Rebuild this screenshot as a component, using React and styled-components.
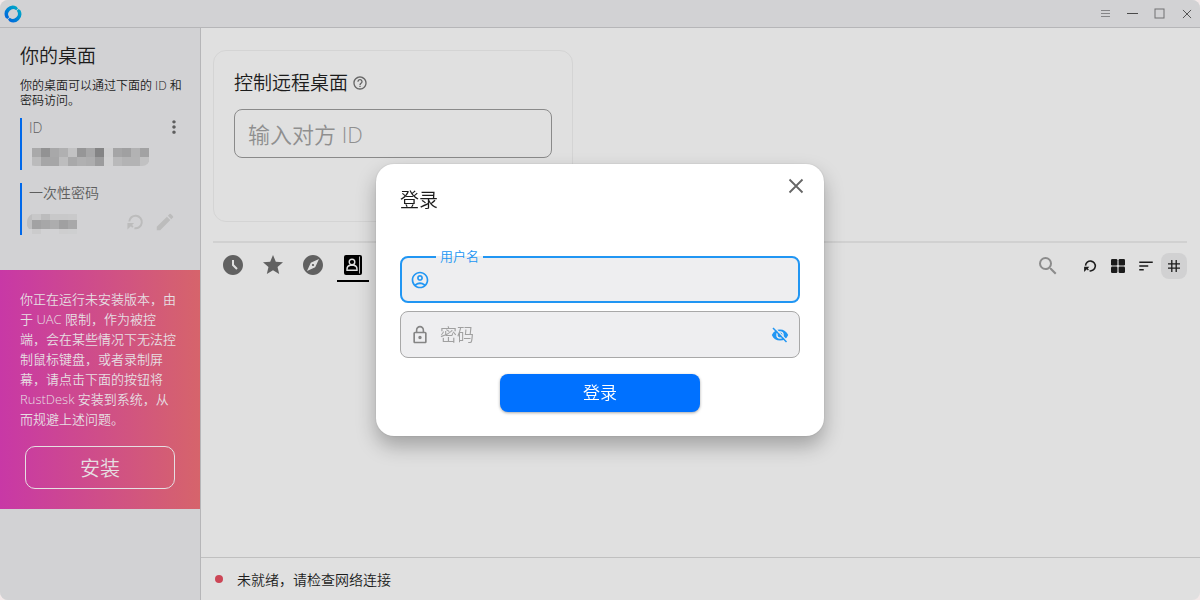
import React from 'react';
import styled, { createGlobalStyle } from 'styled-components';
import {
  MdAccessTimeFilled,
  MdEdit,
  MdExplore,
  MdHelpOutline,
  MdLockOutline,
  MdMoreVert,
  MdOutlineAccountCircle,
  MdSearch,
  MdSort,
  MdStar,
} from 'react-icons/md';

const GlobalStyle = createGlobalStyle`
  * {
    box-sizing: border-box;
  }

  body {
    margin: 0;
    background: #f3e9e9;
    color: #1c1c1c;
    font-family: "Open Sans", "Noto Sans CJK SC", sans-serif;
    font-weight: 350;
  }

  button, input {
    font: inherit;
    color: inherit;
  }

  button {
    padding: 0;
    border: 0;
    background: none;
  }

  svg {
    display: block;
    flex: none;
  }
`;

const Window = styled.div`
  min-height: 100vh;
  display: flex;
  flex-direction: column;
  background: #e0e0e0;
  border-radius: 8px;
  overflow: hidden;
`;

const TitleBar = styled.header`
  display: flex;
  align-items: center;
  justify-content: space-between;
  height: 28px;
  padding-left: 4px;
  background: #d2d2d4;
  border-bottom: 1px solid #b6b6b8;
`;

const WindowButtons = styled.div`
  display: flex;
`;

const WindowButton = styled.button`
  width: 27px;
  height: 27px;
  display: flex;
  align-items: center;
  justify-content: center;
`;

const Body = styled.div`
  flex: 1;
  display: flex;
`;

const Sidebar = styled.aside`
  width: 201px;
  flex: none;
  background: #d2d2d4;
  border-right: 1px solid #b6b6b8;
`;

const Desktop = styled.section`
  padding: 15px 14px 35px 20px;
`;

const Heading = styled.h2`
  margin: 0;
  font-size: 19px;
  line-height: 26px;
  font-weight: 350;
`;

const Hint = styled.p`
  margin: 9px 0 10px;
  font-size: 12px;
  line-height: 15px;
`;

const Board = styled.div`
  height: 52px;
  padding-left: 5px;
  border-left: 2px solid #0068ea;

  & + & {
    margin-top: 13px;
  }
`;

const BoardLabel = styled.div`
  display: flex;
  align-items: center;
  justify-content: space-between;
  height: 18px;
  padding-left: 2px;
  font-size: 14px;
  color: #5e5e5e;
`;

const BoardValue = styled.div`
  display: flex;
  align-items: center;
  height: 20px;
  margin-top: 11px;
`;

const BoardActions = styled.div`
  display: flex;
  gap: 10px;
  margin-left: auto;
  padding-right: 10px;
  color: #bcbcbc;
`;

const IconButton = styled.button`
  display: flex;
  align-items: center;
  justify-content: center;
  color: ${(props) => props.$color || 'inherit'};
`;

const InstallCard = styled.section`
  padding: 19px 20px 20px;
  background: linear-gradient(to right, #c838a6, #d6646b);
  color: #e6dfe2;
`;

const InstallText = styled.p`
  margin: 0 0 17px;
  font-size: 13px;
  line-height: 20px;
`;

const InstallButton = styled.button`
  display: block;
  width: 150px;
  height: 43px;
  margin: 0 auto;
  border: 1px solid #e6dfe2;
  border-radius: 10px;
  font-size: 20px;
`;

const Main = styled.main`
  flex: 1;
  min-width: 0;
  display: flex;
  flex-direction: column;
`;

const Content = styled.div`
  flex: 1;
  padding: 22px 13px 0 12px;
`;

const ConnectCard = styled.section`
  max-width: 360px;
  padding: 20px 20px 63px;
  border: 1px solid #d4d4d4;
  border-radius: 13px;
`;

const ConnectTitle = styled.div`
  display: flex;
  align-items: center;
  gap: 4px;
  height: 24px;
  margin-bottom: 14px;
  color: #666;
`;

const ConnectHeading = styled(Heading)`
  color: #1c1c1c;
`;

const RemoteInput = styled.input`
  display: block;
  width: 100%;
  height: 49px;
  padding: 0 13px;
  border: 1px solid #8a8a8a;
  border-radius: 8px;
  background: transparent;
  font-size: 22px;
  outline: none;

  &::placeholder {
    color: #8f8f8f;
    opacity: 1;
  }
`;

const PeerBar = styled.div`
  display: flex;
  align-items: center;
  justify-content: space-between;
  margin-top: 19px;
  padding-top: 7px;
  border-top: 2px solid #d1d1d1;
`;

const Tabs = styled.nav`
  display: flex;
  gap: 8px;
  padding-left: 4px;
`;

const Tab = styled.button`
  width: 32px;
  height: 32px;
  display: flex;
  align-items: center;
  justify-content: center;
  border-bottom: 2px solid ${(props) => (props.$active ? '#000' : 'transparent')};
  color: ${(props) => (props.$active ? '#000' : '#616161')};
`;

const Tools = styled.div`
  display: flex;
  gap: 2px;
`;

const Tool = styled(IconButton)`
  width: 26px;
  height: 26px;
  border-radius: 8px;
  background: ${(props) => (props.$active ? '#d1d1d2' : 'transparent')};
`;

const SearchTool = styled(Tool)`
  margin-right: 14px;
`;

const StatusBar = styled.footer`
  display: flex;
  align-items: center;
  gap: 14px;
  height: 43px;
  padding-left: 14px;
  border-top: 1px solid #c0c0c0;
  font-size: 14px;
`;

const StatusDot = styled.span`
  width: 8px;
  height: 8px;
  border-radius: 50%;
  background: #cc4656;
`;

const Overlay = styled.div`
  position: fixed;
  inset: 0;
  display: flex;
  align-items: center;
  justify-content: center;
`;

const Dialog = styled.form`
  width: 448px;
  padding: 10px 24px 24px;
  border-radius: 18px;
  background: #fff;
  box-shadow: 0 10px 20px rgba(0, 0, 0, 0.28), 0 0 2px rgba(0, 0, 0, 0.15);
`;

const DialogHeader = styled.div`
  display: flex;
  align-items: flex-start;
  justify-content: space-between;
  height: 82px;
`;

const DialogTitle = styled(Heading)`
  padding-top: 13px;
`;

const CloseButton = styled(IconButton)`
  width: 24px;
  height: 24px;
  margin-right: -8px;
`;

const Field = styled.div`
  position: relative;
  display: flex;
  align-items: center;
  height: 47px;
  margin-bottom: 8px;
  padding: 0 ${(props) => (props.$focused ? 8 : 9)}px;
  border: ${(props) => (props.$focused ? '2px solid #2196f3' : '1px solid #a8a8a8')};
  border-radius: 8px;
  background: #eeeef0;
  color: ${(props) => (props.$focused ? '#2196f3' : '#858585')};
`;

const FieldLabel = styled.label`
  position: absolute;
  top: -12px;
  left: 34px;
  padding: 0 4px;
  background: linear-gradient(#fff 10px, #eeeef0 10px);
  font-size: 13px;
  line-height: 20px;
`;

const FieldInput = styled.input`
  flex: 1;
  min-width: 0;
  height: 43px;
  padding: 0 10px;
  border: 0;
  outline: none;
  background: transparent;
  font-size: 17px;

  &::placeholder {
    color: #a0a0a0;
    opacity: 1;
  }
`;

const SubmitButton = styled.button`
  display: block;
  width: 200px;
  height: 38px;
  margin: 16px auto 0;
  border-radius: 8px;
  background: #0071ff;
  box-shadow: 0 1px 3px rgba(0, 0, 0, 0.35);
  color: #fff;
  font-size: 17px;
  line-height: 36px;
`;

const Logo = () => (
  <svg width="18" height="18" viewBox="0 0 18 18" fill="none" aria-hidden="true">
    <defs>
      <linearGradient id="logo" x1="3" y1="15" x2="15" y2="3" gradientUnits="userSpaceOnUse">
        <stop offset="0" stopColor="#0064df" />
        <stop offset="1" stopColor="#00abc6" />
      </linearGradient>
    </defs>
    <path
      fill="url(#logo)"
      d="M12.4 1.4A8.3 8.3 0 0 0 1.4 12.4L3.4 14L5.2 12.2A5 5 0 0 1 12.2 5.2L14 3.4Z
         M5.6 16.6A8.3 8.3 0 0 0 16.6 5.6L14.6 4L12.8 5.8A5 5 0 0 1 5.8 12.8L4 14.6Z"
    />
  </svg>
);

const MenuIcon = () => (
  <svg width="11" height="11" viewBox="0 0 11 11" stroke="#858587" aria-hidden="true">
    <path d="M1 2.5H10M1 5.5H10M1 8.5H10" />
  </svg>
);

const MinimizeIcon = () => (
  <svg width="11" height="11" viewBox="0 0 11 11" stroke="#4a4a4a" aria-hidden="true">
    <path d="M0 5.5H11" />
  </svg>
);

const MaximizeIcon = () => (
  <svg width="11" height="11" viewBox="0 0 11 11" fill="none" stroke="#707072" aria-hidden="true">
    <rect x="1" y="1" width="9" height="9" />
  </svg>
);

const CrossIcon = ({ size, color, strokeWidth }) => (
  <svg width={size} height={size} viewBox="0 0 16 16" stroke={color} strokeWidth={strokeWidth} aria-hidden="true">
    <path d="M1.5 1.5L14.5 14.5M14.5 1.5L1.5 14.5" />
  </svg>
);

const RefreshIcon = ({ size }) => (
  <svg width={size} height={size} viewBox="0 0 20 20" fill="none" aria-hidden="true">
    <path d="M3.6 9.4A7 7 0 1 1 9.4 16.9" stroke="currentColor" strokeWidth="2.2" />
    <path d="M1.6 11.2H9L6.8 13.4L8.4 15L7 16.4L5.4 14.8L1.6 18.4Z" fill="currentColor" />
  </svg>
);

const AddressBookIcon = () => (
  <svg width="18" height="20" viewBox="0 0 18 20" fill="none" aria-hidden="true">
    <rect width="18" height="20" rx="2" fill="#000" />
    <path d="M15.5 1.5V18.5" stroke="#bbb" strokeWidth="1" />
    <circle cx="8" cy="7" r="2.8" stroke="#e0e0e0" strokeWidth="1.4" />
    <path d="M3 15.2V14C3 11.6 4.6 10.7 6.2 10.3H9.8C11.4 10.7 13 11.6 13 14V15.2Z" stroke="#e0e0e0" strokeWidth="1.4" />
  </svg>
);

const GridIcon = () => (
  <svg width="14" height="14" viewBox="0 0 14 14" fill="#1c1c1c" aria-hidden="true">
    <rect width="6.4" height="6.4" rx="1.2" />
    <rect x="7.6" width="6.4" height="6.4" rx="1.2" />
    <rect y="7.6" width="6.4" height="6.4" rx="1.2" />
    <rect x="7.6" y="7.6" width="6.4" height="6.4" rx="1.2" />
  </svg>
);

const HashIcon = () => (
  <svg width="12" height="12" viewBox="0 0 12 12" stroke="#1c1c1c" strokeWidth="1.3" aria-hidden="true">
    <path d="M3.8 0V12M8.2 0V12M0 3.8H12M0 8.2H12" />
  </svg>
);

const EyeOffIcon = () => (
  <svg width="20" height="20" viewBox="-1 -1 20 20" fill="none" aria-hidden="true">
    <path d="M.8 9C2.3 5.4 5.4 3.4 9 3.4S15.7 5.4 17.2 9C15.7 12.6 12.6 14.6 9 14.6S2.3 12.6 .8 9Z" fill="#2196f3" />
    <circle cx="9" cy="9" r="3.1" stroke="#eeeef0" strokeWidth="1.3" />
    <path d="M3.3 1.5L16.3 15.1" stroke="#eeeef0" strokeWidth="1.4" />
    <path d="M2 2L15.5 16" stroke="#2196f3" strokeWidth="1.5" />
  </svg>
);

// The ID and the password are masked with blocks of grey
const idRows = [
  ['#a9a9aa', '#929293', '#a8a8a9', '#b0b0b1', '#c2c2c3', '#969697', '#a6a6a7', '#848485', '#cfcfd0', '#a5a5a6', '#a0a0a1', '#b2b2b3', '#a2a2a3'],
  ['#bbbbbc', '#a6a6a7', '#a6a6a7', '#bdbdbe', '#a9a9aa', '#b0b0b1', '#adadae', '#9c9c9d', '#d1d1d2', '#b9b9ba', '#b3b3b4', '#b3b3b4', '#c1c1c2'],
];

const passwordRows = [
  { y: 0, height: 6, cells: ['#c8c8c9', '#bcbcbd', '#c8c8c9', '#c8c8c9', '#c9c9ca'] },
  { y: 6, height: 9, cells: ['#a2a2a3', '#a7a7a8', '#adadae', '#a0a0a1', '#a8a8a9'] },
  { y: 15, height: 5, cells: ['#cbcbcc', '#d2d2d4', '#d2d2d4', '#cececf', '#cecfd0'] },
];

const MaskedId = () => (
  <svg width="123" height="18" viewBox="0 0 123 18" role="img" aria-label="ID">
    <clipPath id="id-clip">
      <rect width="123" height="26" y="-8" rx="8" />
    </clipPath>
    <g clipPath="url(#id-clip)">
      {idRows.map((row, y) =>
        row.map((fill, x) => (
          <rect key={`${x}-${y}`} x={5 + x * 9} y={y * 9} width="9" height="9" fill={fill} />
        ))
      )}
    </g>
  </svg>
);

const MaskedPassword = () => (
  <svg width="50" height="24" viewBox="0 -4 50 24" role="img" aria-label="一次性密码">
    <path d="M5 0C2 2 0 4 0 8V12L2 15H5Z" fill="#bfbfc0" />
    {passwordRows.map((row) =>
      row.cells.map((fill, x) => (
        <rect key={`${x}-${row.y}`} x={5 + x * 9} y={row.y} width="9" height={row.height} fill={fill} />
      ))
    )}
  </svg>
);

const tabs = [
  { name: 'recent', icon: <MdAccessTimeFilled size={24} /> },
  { name: 'favorites', icon: <MdStar size={24} /> },
  { name: 'discovered', icon: <MdExplore size={24} /> },
  { name: 'address-book', icon: <AddressBookIcon />, active: true },
];

function App() {
  return (
    <>
      <GlobalStyle />
      <Window>
        <TitleBar>
          <Logo />
          <WindowButtons>
            <WindowButton><MenuIcon /></WindowButton>
            <WindowButton><MinimizeIcon /></WindowButton>
            <WindowButton><MaximizeIcon /></WindowButton>
            <WindowButton><CrossIcon size={10} color="#555" strokeWidth={1.6} /></WindowButton>
          </WindowButtons>
        </TitleBar>
        <Body>
          <Sidebar>
            <Desktop>
              <Heading>你的桌面</Heading>
              <Hint>你的桌面可以通过下面的 ID 和密码访问。</Hint>
              <Board>
                <BoardLabel>
                  ID
                  <IconButton><MdMoreVert size={24} viewBox="-2 -2 28 28" /></IconButton>
                </BoardLabel>
                <BoardValue><MaskedId /></BoardValue>
              </Board>
              <Board>
                <BoardLabel>一次性密码</BoardLabel>
                <BoardValue>
                  <MaskedPassword />
                  <BoardActions>
                    <IconButton><RefreshIcon size={18} /></IconButton>
                    <IconButton><MdEdit size={22} /></IconButton>
                  </BoardActions>
                </BoardValue>
              </Board>
            </Desktop>
            <InstallCard>
              <InstallText>
                你正在运行未安装版本，由于 UAC 限制，作为被控端，会在某些情况下无法控制鼠标键盘，或者录制屏幕，请点击下面的按钮将 RustDesk 安装到系统，从而规避上述问题。
              </InstallText>
              <InstallButton>安装</InstallButton>
            </InstallCard>
          </Sidebar>
          <Main>
            <Content>
              <ConnectCard>
                <ConnectTitle>
                  <ConnectHeading as="label" htmlFor="remote-id">控制远程桌面</ConnectHeading>
                  <MdHelpOutline size={16} />
                </ConnectTitle>
                <RemoteInput id="remote-id" placeholder="输入对方 ID" />
              </ConnectCard>
              <PeerBar>
                <Tabs>
                  {tabs.map((tab) => (
                    <Tab key={tab.name} $active={tab.active}>{tab.icon}</Tab>
                  ))}
                </Tabs>
                <Tools>
                  <SearchTool $color="#8c8c8c"><MdSearch size={24} /></SearchTool>
                  <Tool><RefreshIcon size={14} /></Tool>
                  <Tool><GridIcon /></Tool>
                  <Tool><MdSort size={18} /></Tool>
                  <Tool $active><HashIcon /></Tool>
                </Tools>
              </PeerBar>
            </Content>
            <StatusBar>
              <StatusDot />
              未就绪，请检查网络连接
            </StatusBar>
          </Main>
        </Body>
      </Window>
      <Overlay>
        <Dialog role="dialog" aria-labelledby="login-title" onSubmit={(e) => e.preventDefault()}>
          <DialogHeader>
            <DialogTitle id="login-title">登录</DialogTitle>
            <CloseButton type="button"><CrossIcon size={16} color="#666" strokeWidth={1.8} /></CloseButton>
          </DialogHeader>
          <Field $focused>
            <FieldLabel htmlFor="username">用户名</FieldLabel>
            <MdOutlineAccountCircle size={20} />
            <FieldInput id="username" />
          </Field>
          <Field>
            <MdLockOutline size={20} />
            <FieldInput id="password" type="password" placeholder="密码" aria-label="密码" />
            <IconButton type="button"><EyeOffIcon /></IconButton>
          </Field>
          <SubmitButton type="submit">登录</SubmitButton>
        </Dialog>
      </Overlay>
    </>
  );
}

export default App;
